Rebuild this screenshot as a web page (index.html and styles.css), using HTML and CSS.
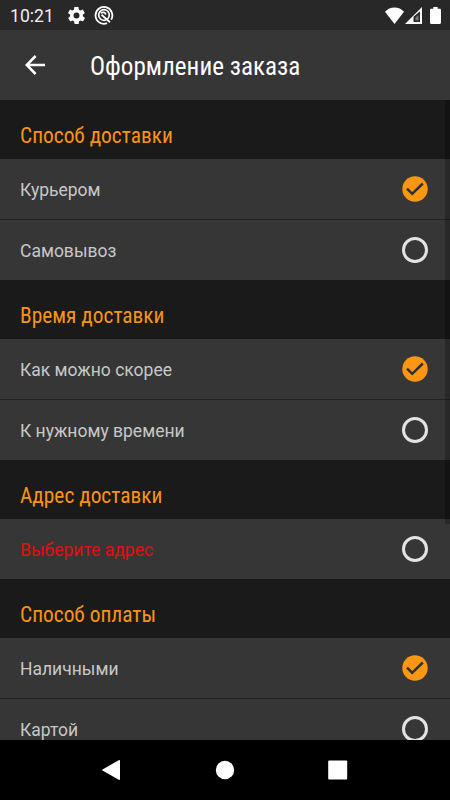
FILE: index.html
```html
<!DOCTYPE html>
<html lang="ru">
<head>
    <meta charset="UTF-8">
    <meta name="viewport" content="width=device-width, initial-scale=1.0">
    <title>Оформление заказа</title>
    <link rel="stylesheet" href="styles.css">
</head>
<body>
    <div class="status-bar">
        <span class="clock">10:21</span>
        <svg class="gear" width="17" height="17" viewBox="2 2 20 20">
            <path fill="#fff" d="M19.4 13a7.500 7.500 0 0 0 0-2l2.100-1.600c.2-.2.200-.4.100-.6l-2-3.500c-.1-.2-.4-.3-.6-.2l-2.500 1c-.5-.4-1.100-.7-1.700-1l-.4-2.600c0-.3-.2-.5-.5-.5h-4c-.2 0-.4.200-.5.400l-.4 2.700c-.6.200-1.200.6-1.700 1l-2.500-1c-.2-.1-.5 0-.6.200l-2 3.500c-.1.200-.1.500.1.600L4.600 11a7.500 7.500 0 0 0 0 2l-2.100 1.600c-.2.200-.2.400-.1.600l2 3.500c.1.200.4.300.6.200l2.500-1c.5.400 1.100.7 1.700 1l.4 2.600c0 .3.200.5.500.5h4c.2 0 .5-.2.500-.4l.4-2.700c.6-.2 1.200-.6 1.700-1l2.500 1c.2.100.5 0 .6-.2l2-3.500c.1-.2.100-.5-.1-.6zM12 15.500a3.500 3.500 0 1 1 0-7 3.500 3.500 0 0 1 0 7z"/>
        </svg>
        <svg class="badge" width="20" height="20" viewBox="0 0 20 20" fill="none" stroke="#fff">
            <path stroke-width="1.800" d="M13 18.200a8.400 8.400 0 1 1 4.200-3.600"/>
            <circle cx="10" cy="10" r="5.300" stroke-width="1.700"/>
            <path stroke-width="1.800" d="M6.800 8.200c2-1.800 4.500-.6 5 1.400M7.500 9.800l8.500 7.400"/>
        </svg>
        <div class="signals">
            <svg width="19" height="17" viewBox="0 0 19 17">
                <path fill="#fff" d="M9.500 17L0 4.800C2.500 2 5.800.5 9.500.5S16.500 2 19 4.800z"/>
            </svg>
            <svg class="cell" width="17" height="17" viewBox="0 0 17 17">
                <path fill="#fff" fill-rule="evenodd" d="M0 17L17 0v17zM8.500 15H15V4.300L8.500 9.800z"/>
                <path fill="#777" d="M10.500 13.500v-3l3-2.500v5.500z"/>
            </svg>
            <svg class="battery" width="11" height="17" viewBox="0 0 11 17">
                <path fill="#fff" d="M3.300 0h4.400v1.700h2.100c.7 0 1.200.5 1.200 1.200v12.900c0 .7-.5 1.200-1.200 1.200H1.200C.5 17 0 16.500 0 15.800V2.900c0-.7.5-1.200 1.200-1.200h2.100z"/>
            </svg>
        </div>
    </div>

    <header class="app-bar">
        <svg width="20" height="20" viewBox="0 0 20 20" fill="none" stroke="#fff" stroke-width="2.500">
            <path d="M20 10H2M10.600 1L1.700 10l8.900 9"/>
        </svg>
        <h1>Оформление заказа</h1>
    </header>

    <main class="content">
        <h2>Способ доставки</h2>
        <div class="option">
            <span>Курьером</span>
            <svg class="check" viewBox="0 0 26 26"><circle cx="13" cy="13" r="12.700"/><path d="M5 12.600l5.200 5.200L20.800 7.500"/></svg>
        </div>
        <div class="option">
            <span>Самовывоз</span>
            <i class="radio"></i>
        </div>

        <h2>Время доставки</h2>
        <div class="option">
            <span>Как можно скорее</span>
            <svg class="check" viewBox="0 0 26 26"><circle cx="13" cy="13" r="12.700"/><path d="M5 12.600l5.200 5.200L20.800 7.500"/></svg>
        </div>
        <div class="option">
            <span>К нужному времени</span>
            <i class="radio"></i>
        </div>

        <h2>Адрес доставки</h2>
        <div class="option error">
            <span>Выберите адрес</span>
            <i class="radio"></i>
        </div>

        <h2>Способ оплаты</h2>
        <div class="option">
            <span>Наличными</span>
            <svg class="check" viewBox="0 0 26 26"><circle cx="13" cy="13" r="12.700"/><path d="M5 12.600l5.200 5.200L20.800 7.500"/></svg>
        </div>
        <div class="option">
            <span>Картой</span>
            <i class="radio"></i>
        </div>
        <div class="scrollbar"></div>
    </main>

    <nav class="nav-bar">
        <svg width="20" height="20" viewBox="0 0 20 20"><path fill="#fff" d="M17.200 0Q18 0 18 .8v18.400q0 .8-.8.8L.5 10.600q-.8-.6 0-1.200z"/></svg>
        <svg width="20" height="20" viewBox="0 0 20 20"><circle cx="10" cy="10" r="9.200" fill="#fff"/></svg>
        <svg width="20" height="20" viewBox="0 0 20 20"><rect x=".2" y=".5" width="19" height="19" rx="1" fill="#fff"/></svg>
    </nav>
</body>
</html>
```
FILE: styles.css
```css
* { box-sizing: border-box; }
body { margin: 0; height: 800px; display: flex; flex-direction: column; overflow: hidden; background: #1a1a1a; color: #fff; font-family: Roboto, sans-serif; }
svg { display: block; flex-shrink: 0; }

.status-bar { height: 30px; flex-shrink: 0; display: flex; align-items: center; padding: 0 10px; background: #282828; }
.clock { width: 45px; font-size: 17.6px; line-height: 30px; margin-top: 2px; color: #eee; }
.gear { margin-left: 13px; }
.badge { margin-left: 9px; }
.signals { display: flex; margin-left: auto; margin-right: -1px; }
.cell { margin-left: 1px; }
.battery { margin-left: 8px; }

.app-bar { height: 70px; flex-shrink: 0; display: flex; align-items: center; padding-left: 25px; background: #363636; }
h1, h2 { margin: 0; font-family: "Roboto Condensed", Roboto, sans-serif; font-stretch: condensed; font-weight: 400; }
h1 { margin: 3px 0 0 45px; font-size: 25.1px; }

.content { position: relative; flex: 1; min-height: 0; overflow: hidden; }
h2 { height: 59px; padding: 12px 20px 0; font-size: 21.4px; line-height: 48px; color: #fb9410; }
.option { height: 60px; display: flex; align-items: center; justify-content: space-between; padding: 0 22px 0 20px; background: #363636; color: #c8c8c8; font-size: 17.5px; }
.option span { padding-top: 1px; }
.option + .option { height: 61px; border-top: 1px solid #222; }
.error { color: #e01010; }
.check { width: 26px; height: 26px; }
.check circle { fill: #fb9713; }
.check path { fill: none; stroke: #2d3033; stroke-width: 2.5; }
.radio { width: 26px; height: 26px; border: 3px solid #e3e3e3; border-radius: 50%; }
.scrollbar { position: absolute; top: 0; right: 0; width: 5px; height: 424px; background: rgba(0, 0, 0, 0.25); }

.nav-bar { height: 60px; flex-shrink: 0; display: flex; justify-content: space-between; align-items: center; padding: 0 102px; background: #000; }
```
